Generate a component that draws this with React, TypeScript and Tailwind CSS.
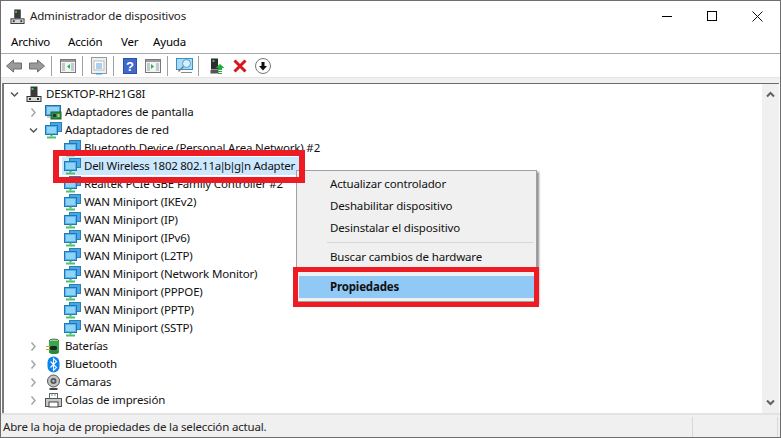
import { ReactNode } from 'react';

const Computer = ({ size = 16 }: { size?: number }) => (
  <svg width={size} height={size} viewBox="0 0 16 16">
    <rect x="4.5" y="0.5" width="7" height="9.5" fill="#3a3a3a" />
    <rect x="5.5" y="2" width="2" height="2" fill="#35d04a" />
    <rect x="1" y="10.5" width="14" height="5" fill="#d8d8d8" stroke="#333" />
    <rect x="3" y="12" width="2" height="2" fill="#333" />
    <rect x="11" y="12" width="2" height="2" fill="#333" />
  </svg>
);

const Network = () => (
  <svg width="17" height="17" viewBox="0 0 17 17">
    <rect x="5.5" y="0.5" width="11" height="9" fill="#4aa6e4" stroke="#2a7fb8" />
    <rect x="0.5" y="3.5" width="12" height="9" fill="#58b4ec" stroke="#1f78b4" />
    <rect x="2" y="5" width="9" height="6" fill="#8fd4f8" />
    <rect x="5.5" y="12.5" width="2" height="2" fill="#4cae5c" />
    <rect x="2" y="14.5" width="9" height="2" fill="#4cc46a" />
  </svg>
);

const Display = () => (
  <svg width="17" height="17" viewBox="0 0 17 17">
    <rect x="0.5" y="1.5" width="15" height="10" fill="#4aa6e4" stroke="#2b6f9f" />
    <rect x="2" y="3" width="12" height="7" fill="#8fd4f8" />
    <rect x="6" y="8" width="10" height="7" fill="#2f8f4f" stroke="#1d5f33" />
    <rect x="8" y="10" width="3" height="3" fill="#1b3f26" />
    <rect x="12.5" y="10" width="2" height="3" fill="#d9c25a" />
    <path d="M2 13h4" stroke="#9a9a9a" />
  </svg>
);

const Battery = () => (
  <svg width="17" height="17" viewBox="0 0 17 17">
    <ellipse cx="9" cy="3" rx="5" ry="2" fill="#9ad19a" stroke="#333" strokeWidth="0.7" />
    <rect x="4" y="3" width="10" height="11" fill="#38a84a" />
    <ellipse cx="9" cy="14" rx="5" ry="2" fill="#2a8a3a" />
    <rect x="5" y="8" width="7" height="4" rx="1.5" fill="#222" />
    <path d="M1 8.5h4M1 11.5h4" stroke="#c9a227" strokeWidth="1.2" />
  </svg>
);

const BluetoothIcon = () => (
  <svg width="17" height="17" viewBox="0 0 17 17">
    <rect x="2.5" y="0.5" width="12" height="16" rx="6" fill="#0a84ee" />
    <path d="M5.5 5.5l6 6-3 3v-12l3 3-6 6" fill="none" stroke="#fff" strokeWidth="1.1" />
  </svg>
);

const Webcam = () => (
  <svg width="17" height="17" viewBox="0 0 17 17">
    <circle cx="8.5" cy="7" r="6" fill="#c4c4c4" stroke="#555" />
    <circle cx="8.5" cy="7" r="3" fill="#555" />
    <circle cx="8.5" cy="7" r="1.2" fill="#a8c4d8" />
    <rect x="4.5" y="14" width="8" height="2" fill="#444" />
  </svg>
);

const Printer = () => (
  <svg width="17" height="17" viewBox="0 0 17 17">
    <rect x="4.5" y="1.5" width="8" height="5" fill="#fff" stroke="#666" />
    <path d="M6 3h2" stroke="#3aa0e8" />
    <path d="M9 3h2" stroke="#5cb85c" />
    <rect x="0.5" y="6.5" width="16" height="8" fill="#c9c9c9" stroke="#555" />
    <rect x="4" y="10" width="9" height="5" fill="#fff" stroke="#444" />
  </svg>
);

const Chevron = ({ open }: { open?: boolean }) => (
  <svg width="9" height="9" viewBox="0 0 9 9">
    {open ? (
      <path d="M1 2.5l3.5 3.5 3.5-3.5" fill="none" stroke="#555" strokeWidth="1.5" />
    ) : (
      <path d="M2.5 0.5l3.5 4-3.5 4" fill="none" stroke="#a6a6a6" strokeWidth="1.5" />
    )}
  </svg>
);

const WinIcon = ({ arrow }: { arrow: string }) => (
  <svg width="16" height="16" viewBox="0 0 16 16">
    <rect x="0.5" y="1.5" width="15" height="13" fill="#f4f4f4" stroke="#777" />
    <rect x="1" y="2" width="14" height="2" fill="#9a9a9a" />
    <path d="M2 6h3M2 8h3M2 10h3M2 12h3M11 6h3M11 8h3M11 10h3M11 12h3" stroke="#8aa0b0" />
    <path d={arrow} fill="#2fae4a" />
  </svg>
);

const Sep = ({ ml }: { ml: string }) => <div className={`w-px h-[20px] bg-[#a0a0a0] ${ml}`} />;

type Row = { label: string; icon: ReactNode; level: 0 | 1 | 2; state?: 'open' | 'closed'; selected?: boolean };

const rows: Row[] = [
  { label: 'DESKTOP-RH21G8I', icon: <Computer />, level: 0, state: 'open' },
  { label: 'Adaptadores de pantalla', icon: <Display />, level: 1, state: 'closed' },
  { label: 'Adaptadores de red', icon: <Network />, level: 1, state: 'open' },
  { label: 'Bluetooth Device (Personal Area Network) #2', icon: <Network />, level: 2 },
  { label: 'Dell Wireless 1802 802.11a|b|g|n Adapter', icon: <Network />, level: 2, selected: true },
  { label: 'Realtek PCIe GBE Family Controller #2', icon: <Network />, level: 2 },
  { label: 'WAN Miniport (IKEv2)', icon: <Network />, level: 2 },
  { label: 'WAN Miniport (IP)', icon: <Network />, level: 2 },
  { label: 'WAN Miniport (IPv6)', icon: <Network />, level: 2 },
  { label: 'WAN Miniport (L2TP)', icon: <Network />, level: 2 },
  { label: 'WAN Miniport (Network Monitor)', icon: <Network />, level: 2 },
  { label: 'WAN Miniport (PPPOE)', icon: <Network />, level: 2 },
  { label: 'WAN Miniport (PPTP)', icon: <Network />, level: 2 },
  { label: 'WAN Miniport (SSTP)', icon: <Network />, level: 2 },
  { label: 'Baterías', icon: <Battery />, level: 1, state: 'closed' },
  { label: 'Bluetooth', icon: <BluetoothIcon />, level: 1, state: 'closed' },
  { label: 'Cámaras', icon: <Webcam />, level: 1, state: 'closed' },
  { label: 'Colas de impresión', icon: <Printer />, level: 1, state: 'closed' },
];

// the pipe glyph is much wider in this font than in the original, so pull it in
const Label = ({ text }: { text: string }) => (
  <>
    {text.split(/(\|)/).map((part, i) =>
      part === '|' ? (
        <span key={i} className="ml-[-1.5px] tracking-[-1.7px]">|</span>
      ) : (
        <span key={i}>{part}</span>
      )
    )}
  </>
);

const TreeRow = ({ row }: { row: Row }) => {
  const indent = row.level === 0 ? 'pl-[6px]' : row.level === 1 ? 'pl-[25px]' : 'pl-[58px]';
  return (
    <div className={`flex items-center h-[18px] ${indent}`}>
      {row.level < 2 && (
        <div className="w-[14px] flex items-center">
          {row.state && <Chevron open={row.state === 'open'} />}
        </div>
      )}
      <div className={`flex items-center h-[18px] ${row.selected ? 'bg-[#cce8ff] w-[238px]' : ''}`}>
        <div className="w-[20px] pl-[2px] flex items-center">{row.icon}</div>
        <span className={`pl-[2px] whitespace-nowrap text-[#111] ${row.selected ? 'tracking-[-0.26px]' : ''}`}>
          <Label text={row.label} />
        </span>
      </div>
    </div>
  );
};

const App = () => (
  <div className="relative w-[781px] h-[438px] overflow-hidden bg-white border border-[#6e6e6e] text-[11.5px] leading-[18px] text-black font-['Noto_Sans',sans-serif] tracking-[-0.16px] flex flex-col">
    {/* title bar */}
    <div className="h-[30px] flex items-center shrink-0">
      <div className="pl-[9px] w-[29px]"><Computer size={15} /></div>
      <span className="text-[#222]">Administrador de dispositivos</span>
      <div className="ml-auto flex items-center pr-[17px]">
        <div className="w-[10px] h-px bg-black" />
        <div className="ml-[35px] w-[10px] h-[10px] border border-black" />
        <svg className="ml-[35px]" width="11" height="11" viewBox="0 0 11 11">
          <path d="M0.5 0.5l10 10M10.5 0.5l-10 10" stroke="#111" strokeWidth="1" />
        </svg>
      </div>
    </div>

    {/* menu */}
    <div className="h-[23px] flex items-center shrink-0 border-b border-[#a9a9b4] pl-[10px]">
      <span className="w-[57px]">Archivo</span>
      <span className="w-[53px]">Acción</span>
      <span className="w-[32px]">Ver</span>
      <span>Ayuda</span>
    </div>

    {/* toolbar */}
    <div className="h-[23px] flex items-center shrink-0 pl-[5px]">
      <svg width="16" height="16" viewBox="0 0 16 16">
        <path d="M0.5 8l7-6v3h8v6h-8v3z" fill="#9a9a9a" stroke="#6e6e6e" />
      </svg>
      <svg className="ml-[7px]" width="16" height="16" viewBox="0 0 16 16">
        <path d="M15.5 8l-7-6v3h-8v6h8v3z" fill="#9a9a9a" stroke="#6e6e6e" />
      </svg>
      <Sep ml="ml-[6px]" />
      <div className="ml-[8px] flex"><WinIcon arrow="M10 6v5l-3-2.5z" /></div>
      <Sep ml="ml-[6px]" />
      <svg className="ml-[8px]" width="16" height="18" viewBox="0 0 16 18">
        <rect x="0.5" y="0.5" width="15" height="16" fill="#eee" stroke="#999" />
        <rect x="3" y="4" width="10" height="9" fill="#fff" stroke="#bbb" />
        <path d="M5 7h6M5 9h6M5 11h6" stroke="#5a9fd8" />
        <rect x="5" y="16" width="6" height="1.5" fill="#3aa0e8" />
      </svg>
      <Sep ml="ml-[6px]" />
      <svg className="ml-[9px]" width="14" height="16" viewBox="0 0 14 16">
        <rect width="14" height="16" fill="#2f4fb0" />
        <rect x="1" y="1" width="12" height="14" fill="#4068c8" />
        <text x="7" y="13" textAnchor="middle" fontSize="13" fontWeight="700" fill="#fff" fontFamily="Liberation Sans">?</text>
      </svg>
      <div className="ml-[8px] flex"><WinIcon arrow="M6 6v5l3-2.5z" /></div>
      <Sep ml="ml-[6px]" />
      <svg className="ml-[8px]" width="17" height="17" viewBox="0 0 17 17">
        <rect x="0.5" y="1.5" width="16" height="11" fill="#a8dcf7" stroke="#3a8fc4" />
        <circle cx="10.5" cy="6.5" r="4" fill="#d9f0fb" stroke="#4a9fcf" />
        <path d="M7.5 9.5l-5 5" stroke="#777" strokeWidth="1.5" />
        <path d="M5 15.5h11" stroke="#888" />
      </svg>
      <Sep ml="ml-[5px]" />
      <svg className="ml-[11px]" width="15" height="16" viewBox="0 0 15 16">
        <rect x="1" y="0.5" width="7" height="11" fill="#2e2e2e" />
        <rect x="2.5" y="2" width="2" height="2" fill="#35d04a" />
        <rect x="0.5" y="12" width="8" height="3.5" fill="#555" />
        <path d="M10 6l4.5 4h-2.5v2h-4v-2h-2.5z" fill="#1fae3f" />
        <path d="M8 13.5h4M8 15.5h4" stroke="#1fae3f" />
      </svg>
      <svg className="ml-[8px]" width="14" height="14" viewBox="0 0 14 14">
        <path d="M1.5 1.5l11 11M12.5 1.5l-11 11" stroke="#d9141c" strokeWidth="3" />
      </svg>
      <svg className="ml-[8px]" width="16" height="16" viewBox="0 0 16 16">
        <circle cx="8" cy="8" r="7.5" fill="#fff" stroke="#777" />
        <path d="M8 12.5l-4-4.5h2.5v-4h3v4h2.5z" fill="#111" />
      </svg>
    </div>

    {/* band above the tree */}
    <div className="h-[6px] shrink-0 bg-[#f0f0f0] border-t border-[#e6e6e6]" />

    {/* tree + scrollbar */}
    <div className="flex-1 min-h-0 flex ml-px mr-px border-t border-[#6b6b6b] border-l-2 border-l-[#7a7a7a]">
      <div className="flex-1 min-w-0 pt-[1px]">
        {rows.map((r) => (
          <TreeRow key={r.label} row={r} />
        ))}
      </div>
      <div className="w-[17px] shrink-0 bg-[#f0f0f0] flex flex-col items-center justify-between py-[7px]">
        <svg width="9" height="7" viewBox="0 0 9 7">
          <path d="M1 5.5l3.5-3.5 3.5 3.5" fill="none" stroke="#606060" strokeWidth="2" />
        </svg>
        <svg width="9" height="7" viewBox="0 0 9 7">
          <path d="M1 1.5l3.5 3.5 3.5-3.5" fill="none" stroke="#606060" strokeWidth="2" />
        </svg>
      </div>
    </div>

    {/* status bar */}
    <div className="h-[24px] shrink-0 bg-[#f0f0f0] border-t-2 border-[#e3e3e3] flex items-center pl-[2px] pt-[1px]">
      <span className="text-[#222] whitespace-nowrap">Abre la hoja de propiedades de la selección actual.</span>
      <div className="ml-auto h-[20px] w-[86px] border-l border-[#d8d8d8] mr-[2px] border-r" />
    </div>

    {/* context menu */}
    <div className="absolute left-[295px] top-[169px] w-[241px] h-[132px] bg-[#f0f0f0] border border-[#a0a0a0] shadow-[2px_2px_2px_rgba(0,0,0,0.45)] pt-[2px] px-[2px] text-[#111]">
      <div className="h-[22px] pl-[31px] flex items-center">Actualizar controlador</div>
      <div className="h-[22px] pl-[31px] flex items-center">Deshabilitar dispositivo</div>
      <div className="h-[22px] pl-[31px] flex items-center">Desinstalar el dispositivo</div>
      <div className="h-[7px] ml-[28px] flex items-center"><div className="h-px w-full bg-[#d7d7d7]" /></div>
      <div className="h-[22px] pl-[31px] flex items-center">Buscar cambios de hardware</div>
      <div className="mt-[8px] h-[22px] pl-[31px] flex items-center bg-[#90c8f6] font-bold">Propiedades</div>
    </div>

    {/* red marks over the screenshot */}
    <div className="absolute left-[52px] top-[149px] w-[252px] h-[33px] border-[6px] border-[#ed1c24]" />
    <div className="absolute left-[292px] top-[266px] w-[246px] h-[40px] border-[5px] border-[#ed1c24]" />
  </div>
);

export default App;
